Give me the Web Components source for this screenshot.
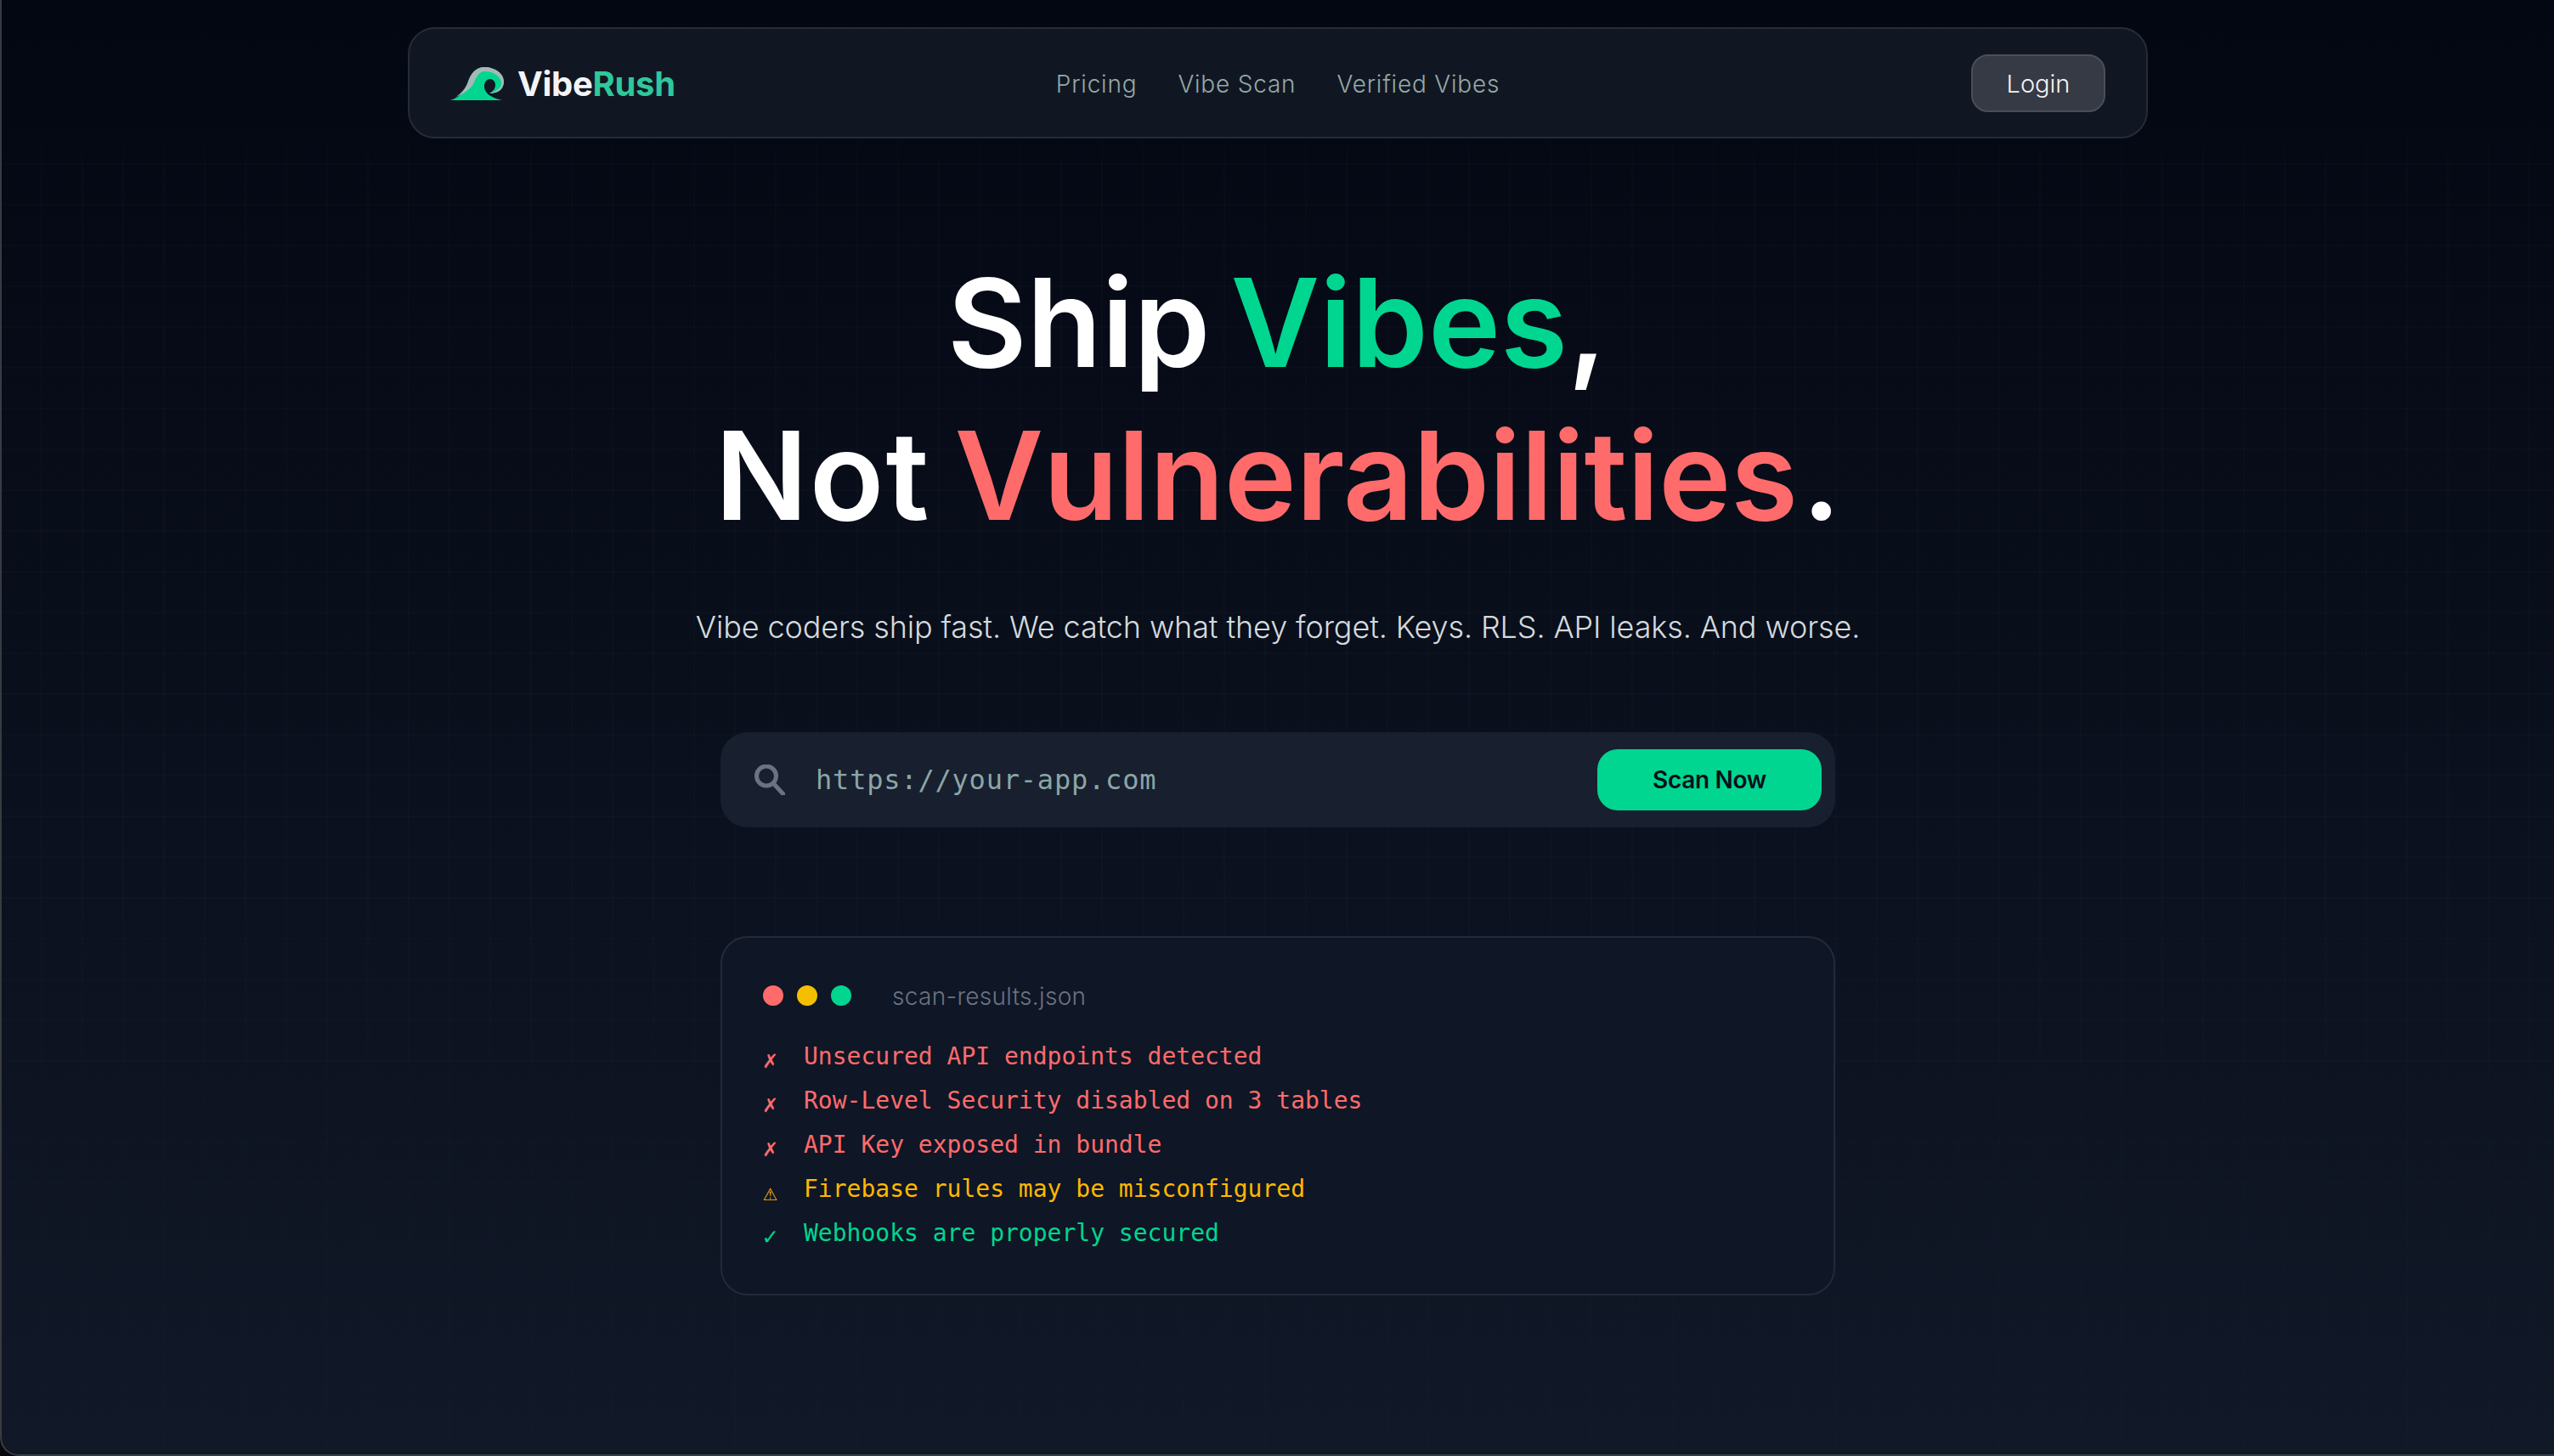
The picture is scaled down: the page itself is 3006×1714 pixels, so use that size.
<!DOCTYPE html>
<html lang="en">
<head>
<meta charset="utf-8">
<title>VibeRush</title>
<style>
  html, body { margin: 0; height: 100%; }
  body { background: #08090e; font-family: "Inter", "Liberation Sans", sans-serif; }
</style>
</head>
<body>
<vibe-page>
  <vibe-nav>
    <a slot="links">Pricing</a>
    <a slot="links">Vibe Scan</a>
    <a slot="links">Verified Vibes</a>
  </vibe-nav>
  <vibe-hero>
    <span slot="line1" style="word-spacing:-12px;margin-left:-2px">Ship <em style="color:#00d68f;font-style:normal">Vibes</em>,</span>
    <span slot="line2" style="word-spacing:-8px"><span style="letter-spacing:2px">Not</span> <em style="color:#ff6b6b;font-style:normal;letter-spacing:-.4px">Vulnerabilities</em><span style="letter-spacing:0;margin-left:5px">.</span></span>
    <span slot="sub">Vibe coders ship fast. We catch what they forget. Keys. RLS. API leaks. And worse.</span>
  </vibe-hero>
  <vibe-scan-form placeholder="https://your-app.com"></vibe-scan-form>
  <vibe-terminal name="scan-results.json">
    <vibe-line kind="bad">Unsecured API endpoints detected</vibe-line>
    <vibe-line kind="bad">Row-Level Security disabled on 3 tables</vibe-line>
    <vibe-line kind="bad">API Key exposed in bundle</vibe-line>
    <vibe-line kind="warn">Firebase rules may be misconfigured</vibe-line>
    <vibe-line kind="ok">Webhooks are properly secured</vibe-line>
  </vibe-terminal>
</vibe-page>

<script>
class VibePage extends HTMLElement {
  constructor() {
    super();
    this.attachShadow({ mode: 'open' });
    this.shadowRoot.innerHTML = `
    <style>
      :host {
        display: block;
        box-sizing: border-box;
        height: 1714px;
        overflow: hidden;
        position: relative;
        border-left: 2px solid #3a3b42;
        border-bottom: 2px solid #3a3b42;
        border-bottom-left-radius: 22px;
        background: linear-gradient(180deg, #030712 0%, #111827 100%);
      }
      .grid {
        position: absolute;
        inset: 0 0 0 -2px;
        background-image:
          linear-gradient(rgba(255,255,255,.014) 2px, transparent 2px),
          linear-gradient(90deg, rgba(255,255,255,.014) 2px, transparent 2px);
        background-size: 48px 48px;
        -webkit-mask-image: linear-gradient(180deg, rgba(0,0,0,.3) 150px, #000 200px, #000 1000px, rgba(0,0,0,.4) 1400px);
        mask-image: linear-gradient(180deg, rgba(0,0,0,.3) 150px, #000 200px, #000 1000px, rgba(0,0,0,.4) 1400px);
      }
      main {
        position: relative;
        display: flex;
        flex-direction: column;
        align-items: center;
        padding-top: 32px;
      }
    </style>
    <div class="grid"></div>
    <main><slot></slot></main>`;
  }
}

class VibeNav extends HTMLElement {
  constructor() {
    super();
    this.attachShadow({ mode: 'open' });
    this.shadowRoot.innerHTML = `
    <style>
      :host {
        display: grid;
        grid-template-columns: 1fr auto 1fr;
        align-items: center;
        box-sizing: border-box;
        width: 2048px;
        height: 131px;
        padding: 0 48px;
        background: #111722;
        border: 2px solid #262b38;
        border-radius: 32px;
      }
      .logo { display: flex; align-items: center; gap: 16px; font-size: 40px; font-weight: 700; letter-spacing: -0.3px; color: #f3f4f6; }
      .logo b { font-weight: 700; color: #2fc79b; }
      .logo span { position: relative; top: 1px; }
      nav { display: flex; gap: 48px; padding-top: 2px; font-size: 28px; font-weight: 300; letter-spacing: .8px; }
      ::slotted(a) { color: #94a9a9; }
      .login { justify-self: end; }
      button {
        box-sizing: border-box;
        width: 158px;
        height: 68px;
        padding-top: 3px;
        background: #363a45;
        border: 2px solid #4a4e59;
        border-radius: 20px;
        color: #f3f4f6;
        font: 300 29px "Inter", sans-serif;
      }
    </style>
    <div class="logo">
      <svg width="63" height="40" viewBox="0 0 63 40">
        <path fill="#00d68f" d="M0 40 C10 37 17 30 21 18 C24 8 31 1 40 1 C53 1 63 9 63 18 C63 27 56 32 46 32 C51 29 53 26 53 22 C53 18 50 15 47 15 C43 15 41 18 40 22 C39 30 46 37 61 40 Z"/>
        <path fill="#a4b9b4" d="M6 36 C13 32 18 26 21 18 C24 8 31 1 40 1 C53 1 63 9 63 18 C63 27 56 32 46 32 C53 30 60 26 60 20 C60 12 50 6 41 6 C33 6 30 14 27 21 C24 27 15 33 6 36 Z"/>
      </svg>
      <span>Vibe<b>Rush</b></span>
    </div>
    <nav><slot name="links"></slot></nav>
    <div class="login"><button>Login</button></div>`;
  }
}

class VibeHero extends HTMLElement {
  constructor() {
    super();
    this.attachShadow({ mode: 'open' });
    this.shadowRoot.innerHTML = `
    <style>
      :host { display: block; text-align: center; margin-top: 127px; }
      h1 { margin: 0; font-size: 144px; line-height: 180px; font-weight: 600; color: #fff; letter-spacing: 0; }
      h1 slot { display: block; }
      p { margin: 58px 0 0; font-size: 36px; line-height: 60px; font-weight: 300; color: #d3dadd; letter-spacing: -.13px; }
    </style>
    <h1><slot name="line1"></slot><slot name="line2"></slot></h1>
    <p><slot name="sub"></slot></p>`;
  }
}

class VibeScanForm extends HTMLElement {
  constructor() {
    super();
    this.attachShadow({ mode: 'open' });
    this.shadowRoot.innerHTML = `
    <style>
      :host {
        display: flex;
        align-items: center;
        box-sizing: border-box;
        width: 1312px;
        height: 112px;
        margin-top: 94px;
        padding: 0 16px 0 40px;
        background: #181f2e;
        border-radius: 32px;
      }
      svg { flex: none; }
      .url { flex: 1; margin-left: 36px; font: 32px "DejaVu Sans Mono", monospace; letter-spacing: .8px; color: #8ba6a6; }
      button {
        width: 264px;
        height: 72px;
        background: #00d68f;
        border: 0;
        border-radius: 24px;
        color: #0a0f1c;
        font: 600 28px "Inter", sans-serif;
        letter-spacing: -0.3px;
      }
    </style>
    <svg width="36" height="36" viewBox="0 0 36 36" fill="none" stroke="#6b7280" stroke-width="5">
      <circle cx="14" cy="13.5" r="11.5"/>
      <path d="M23 23 L34 35" stroke-linecap="round"/>
    </svg>
    <span class="url"></span>
    <button>Scan Now</button>`;
  }
  connectedCallback() {
    this.shadowRoot.querySelector('.url').textContent = this.getAttribute('placeholder');
  }
}

class VibeTerminal extends HTMLElement {
  constructor() {
    super();
    this.attachShadow({ mode: 'open' });
    this.shadowRoot.innerHTML = `
    <style>
      :host {
        display: block;
        box-sizing: border-box;
        width: 1312px;
        height: 423px;
        margin-top: 128px;
        padding: 50px 48px 0;
        background: #0f1626;
        border: 2px solid #232a3a;
        border-radius: 32px;
      }
      header { display: flex; align-items: center; gap: 16px; height: 36px; margin-bottom: 28px; }
      i { width: 24px; height: 24px; border-radius: 50%; }
      span { margin-left: 32px; font-size: 28px; font-weight: 300; color: #6b7280; letter-spacing: .3px; position: relative; top: 1px; }
    </style>
    <header>
      <i style="background:#ff6b6b"></i><i style="background:#f4bf00"></i><i style="background:#00d68f"></i>
      <span></span>
    </header>
    <slot></slot>`;
  }
  connectedCallback() {
    this.shadowRoot.querySelector('span').textContent = this.getAttribute('name');
  }
}

class VibeLine extends HTMLElement {
  constructor() {
    super();
    this.attachShadow({ mode: 'open' });
    this.shadowRoot.innerHTML = `
    <style>
      :host {
        display: flex;
        align-items: baseline;
        height: 52px;
        font: 28px/52px "DejaVu Sans Mono", monospace;
      }
      :host([kind=bad]) { color: #ff6b6b; }
      :host([kind=warn]) { color: #ffb800; }
      :host([kind=ok]) { color: #00d68f; }
      b { width: 48px; font-weight: 400; font-size: 28px; position: relative; top: 4px; }
    </style>
    <b></b><slot></slot>`;
  }
  connectedCallback() {
    const marks = { bad: '\u2717', warn: '\u26A0', ok: '\u2713' };
    this.shadowRoot.querySelector('b').textContent = marks[this.getAttribute('kind')];
  }
}

customElements.define('vibe-page', VibePage);
customElements.define('vibe-nav', VibeNav);
customElements.define('vibe-hero', VibeHero);
customElements.define('vibe-scan-form', VibeScanForm);
customElements.define('vibe-terminal', VibeTerminal);
customElements.define('vibe-line', VibeLine);
</script>
</body>
</html>
